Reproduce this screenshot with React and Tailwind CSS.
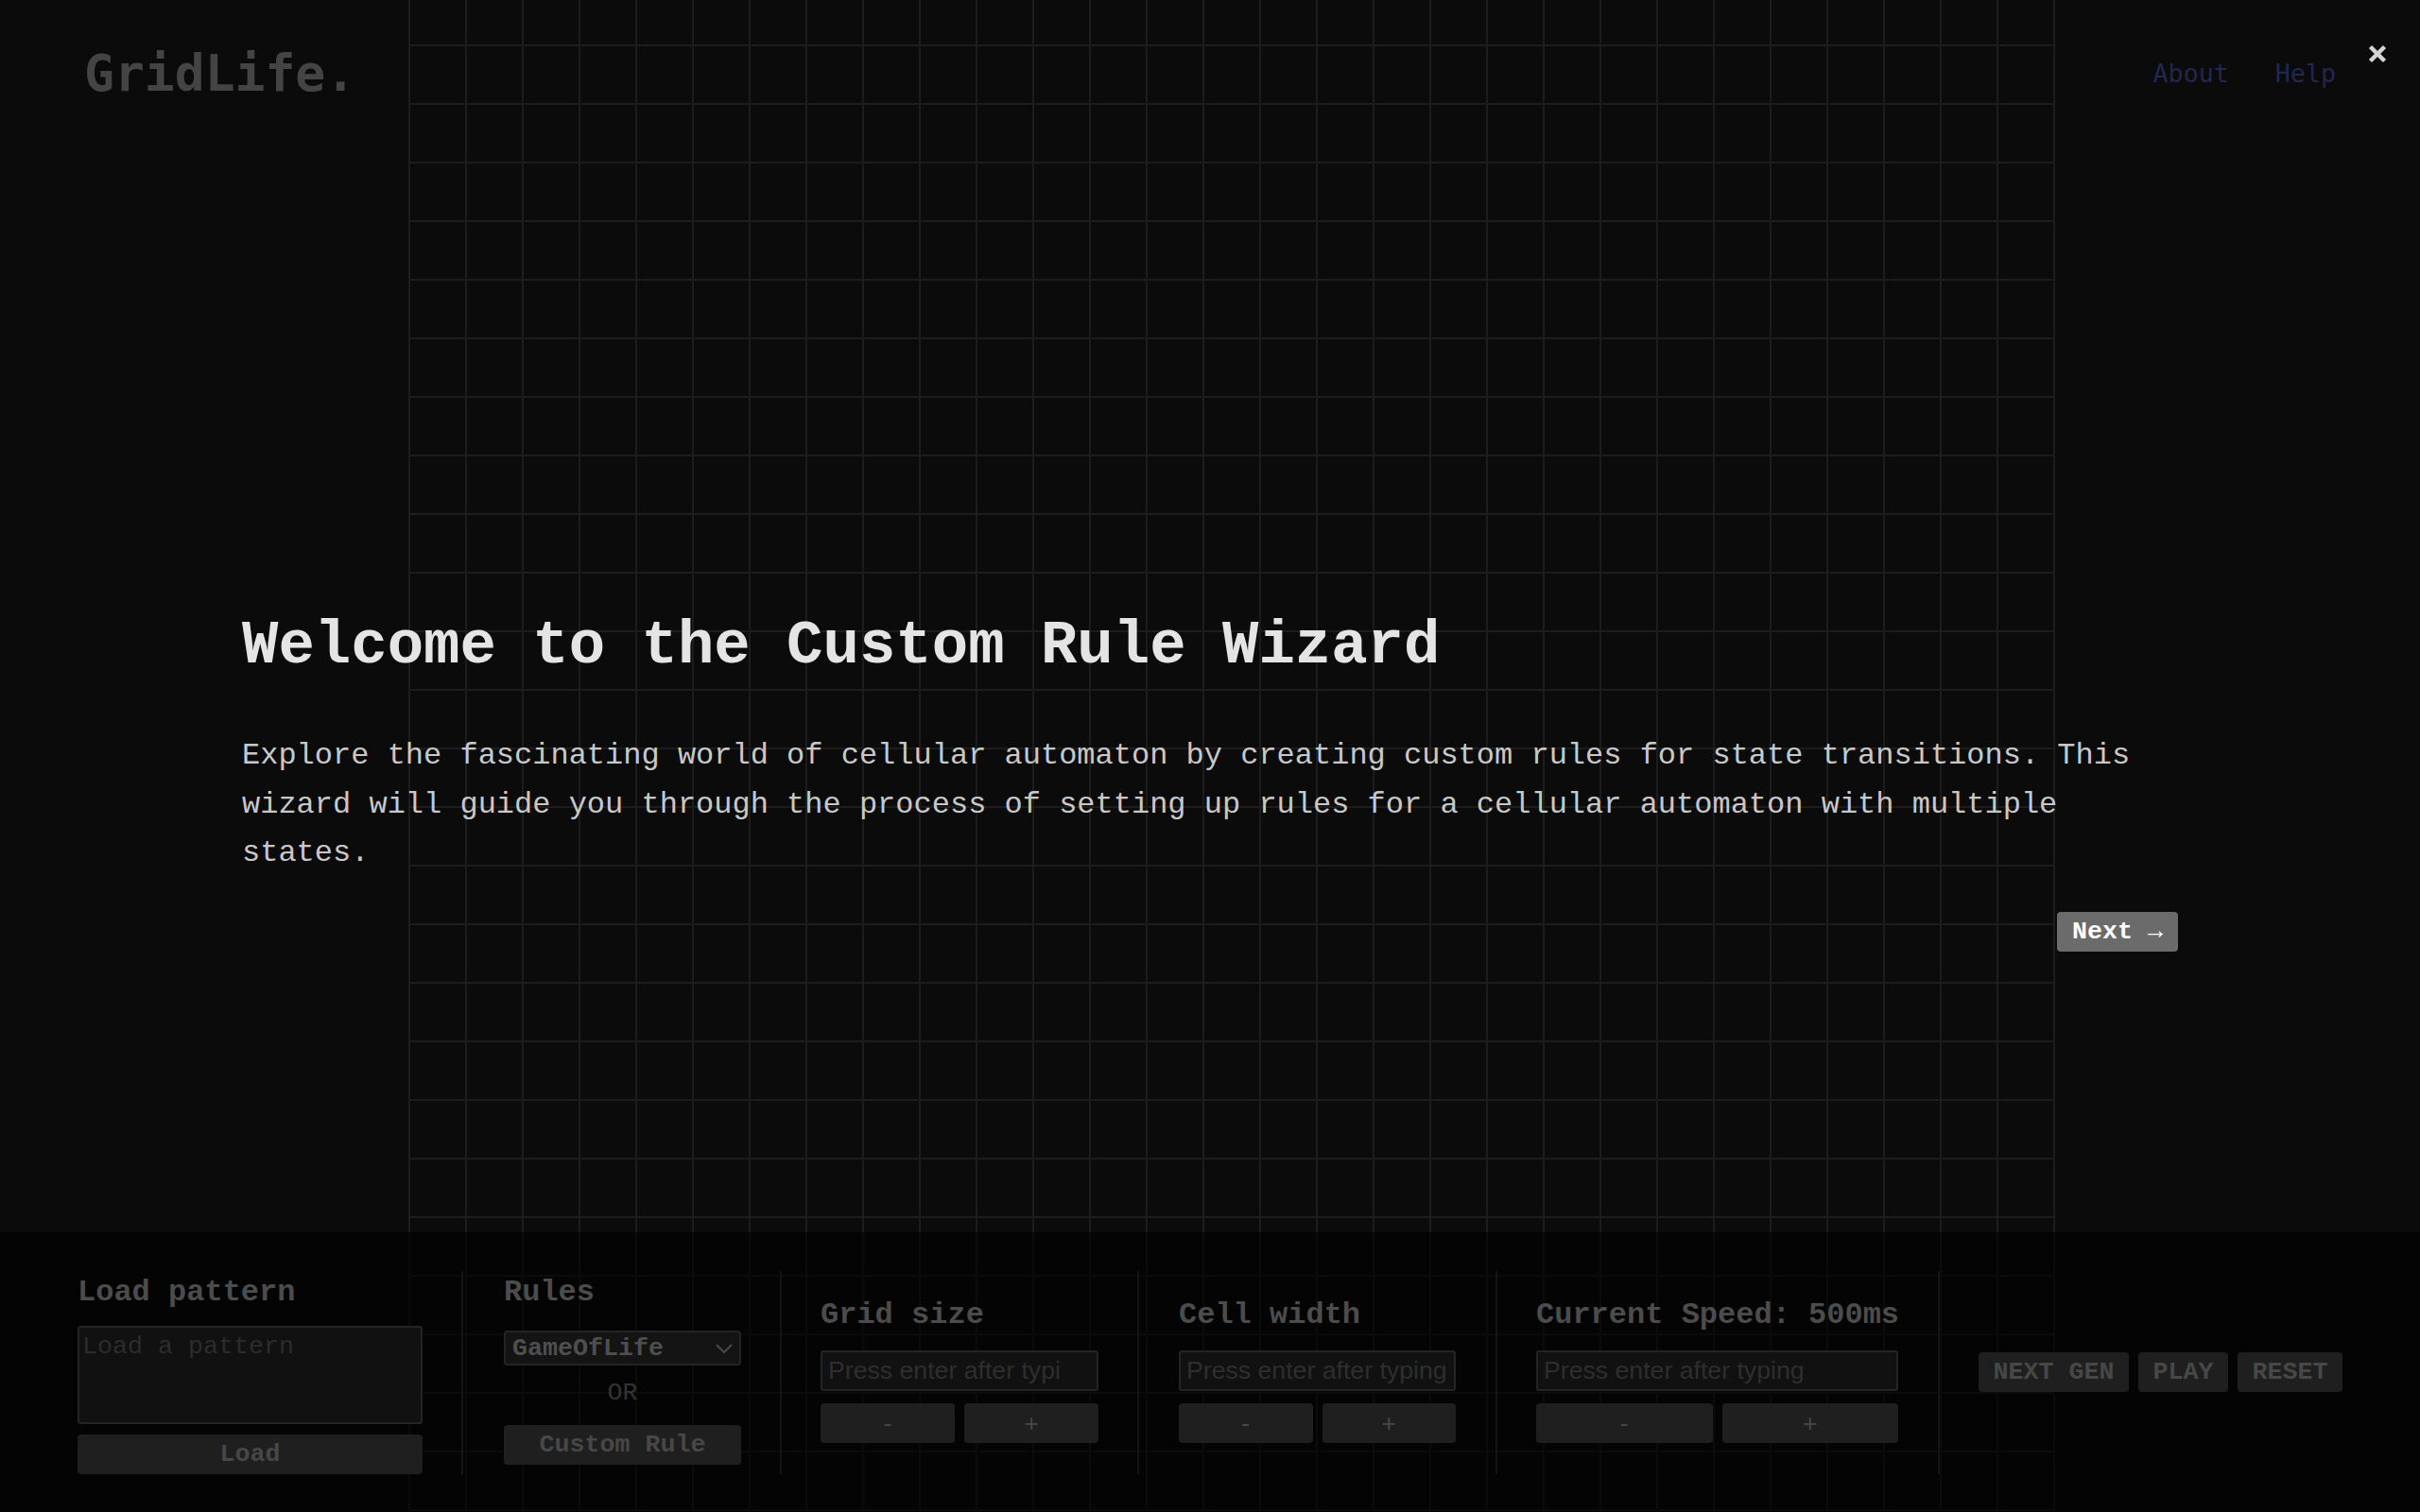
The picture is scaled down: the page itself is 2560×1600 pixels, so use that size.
import React from 'react'

const mono = "font-['Liberation_Mono','Courier_New',monospace]"
const dejavu = "font-['DejaVu_Sans_Mono',monospace]"
const sans = "font-['Liberation_Sans',Arial,sans-serif]"

function Label({ children }) {
  return <p className={`${mono} text-[32px] font-bold leading-[48px] text-[#4c4c4c] whitespace-nowrap`}>{children}</p>
}

function Divider({ className = '' }) {
  return <div className={`h-[215px] w-[2px] shrink-0 bg-[#141414] ${className}`} />
}

function PanelButton({ children, className = '' }) {
  return (
    <button className={`h-[42px] rounded-[4px] bg-[#1f1f1f] ${mono} text-[26.67px] font-bold leading-[30px] text-[#474747] ${className}`}>
      {children}
    </button>
  )
}

function Stepper({ label, width, inputPad = 'pr-[6px]' }) {
  return (
    <div className={`flex shrink-0 flex-col pb-[10px] ${width}`}>
      <Label>{label}</Label>
      <input
        placeholder="Press enter after typing"
        className={`mt-[13px] h-[43px] w-full rounded-[3px] border-2 border-[#242424] bg-[#111111] pl-[6px] ${inputPad} ${sans} text-[26.67px] text-[#555] outline-none placeholder:text-[#2e2e2e]`}
      />
      <div className="mt-[13px] flex gap-[10px]">
        <button className={`h-[42px] flex-1 rounded-[4px] bg-[#1f1f1f] ${sans} text-[26.67px] text-[#474747]`}>-</button>
        <button className={`h-[42px] flex-1 rounded-[4px] bg-[#1f1f1f] ${sans} text-[26.67px] text-[#474747]`}>+</button>
      </div>
    </div>
  )
}

function ControlPanel() {
  return (
    <div className="absolute inset-x-0 bottom-0 flex h-[296px] items-center bg-black/60 pl-[82px]">
      {/* load pattern */}
      <div className="flex w-[365px] shrink-0 flex-col">
        <Label>Load pattern</Label>
        <textarea
          placeholder="Load a pattern"
          className={`mt-[11px] h-[104px] w-full resize-none rounded-[3px] border-2 border-[#242424] bg-[#111111] px-[3px] pt-[5px] ${mono} text-[26.67px] leading-[30px] text-[#555] outline-none placeholder:text-[#2c2c2c]`}
        />
        <PanelButton className="mt-[11px] h-[41px] w-full">Load</PanelButton>
      </div>
      <Divider className="ml-[41px] mr-[43px]" />
      {/* rules */}
      <div className="flex w-[251px] shrink-0 flex-col pb-[10px]">
        <Label>Rules</Label>
        <div className="mt-[16px] flex h-[37px] items-center justify-between rounded-[4px] border-2 border-[#242424] bg-[#141414] pl-[7px] pr-[7px]">
          <span className={`${mono} text-[26.67px] font-bold leading-[30px] text-[#4f4f4f]`}>GameOfLife</span>
          <svg width="18" height="10" viewBox="0 0 18 10" fill="none" stroke="#4a4a4a" strokeWidth="2">
            <path d="M1 1 L9 9 L17 1" />
          </svg>
        </div>
        <p className={`mt-[14px] text-center ${mono} text-[26.67px] leading-[30px] text-[#333]`}>OR</p>
        <PanelButton className="mt-[19px] h-[41px] w-full">Custom Rule</PanelButton>
      </div>
      <Divider className="ml-[41px] mr-[41px]" />
      <Stepper label="Grid size" width="w-[294px]" inputPad="pr-[37px]" />
      <Divider className="ml-[41px] mr-[42px]" />
      <Stepper label="Cell width" width="w-[293px]" />
      <Divider className="ml-[42px] mr-[41px]" />
      <Stepper label="Current Speed: 500ms" width="w-[383px]" />
      <Divider className="ml-[42px] mr-[41px]" />
      <div className="flex gap-[10px]">
        <PanelButton className="px-[15.5px]">NEXT GEN</PanelButton>
        <PanelButton className="px-[15.5px]">PLAY</PanelButton>
        <PanelButton className="px-[15.5px]">RESET</PanelButton>
      </div>
    </div>
  )
}

function Wizard() {
  return (
    <div className="absolute inset-0 flex flex-col justify-center pl-[256px] pt-[55px]">
      <button className="absolute right-[35px] top-[47px]">
        <svg width="20" height="20" viewBox="0 0 20 20" stroke="#d4d4d4" strokeWidth="4.5">
          <path d="M2.5 2.5 L17.5 17.5 M17.5 2.5 L2.5 17.5" />
        </svg>
      </button>
      <div className={`flex w-[2048px] flex-col ${mono}`}>
        <h2 className="text-[64px] font-bold leading-[72.5px] text-[#e4e4e4]">Welcome to the Custom Rule Wizard</h2>
        <p className="mt-[54px] text-[32px] leading-[51.2px] text-[#c8c8c8]">
          Explore the fascinating world of cellular automaton by creating custom rules for state transitions. This wizard will guide you through the process of setting up rules for a cellular automaton with multiple states.
        </p>
        <button className="mt-[37px] self-end rounded-[4px] bg-[#6b6b6b] px-[16px] py-[6px] text-[26.67px] font-bold leading-[30px] text-white">
          Next →
        </button>
      </div>
    </div>
  )
}

export default function App() {
  return (
    <div className="relative h-[1600px] w-[2560px] overflow-hidden bg-[#0b0b0b]">
      <div className="flex h-full">
        <div className="w-[432px] shrink-0 pl-[89px] pt-[47px]">
          <h1 className={`${dejavu} text-[53px] font-bold leading-[62px] text-[#444444]`}>GridLife.</h1>
        </div>
        <div className="h-full w-[1742px] shrink-0 border-r-2 border-[#1c1c1c] bg-[linear-gradient(to_right,#1c1c1c_2px,transparent_2px),linear-gradient(to_bottom,#1c1c1c_2px,transparent_2px)] bg-[size:60px_62px] bg-[position:0_47px]" />
        <nav className={`flex flex-1 justify-end gap-[49px] pr-[89px] pt-[62px] ${dejavu} text-[26.67px] leading-[31px] text-[#23264f]`}>
          <a>About</a>
          <a>Help</a>
        </nav>
      </div>
      <ControlPanel />
      <Wizard />
    </div>
  )
}
